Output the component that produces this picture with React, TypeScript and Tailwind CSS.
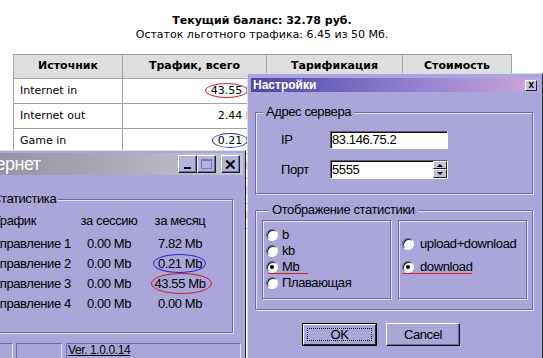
import React from "react";

const rows = [
  { name: "Internet in", total: "43.55", ring: "red", tar: "1.50 руб./Мб", cost: "29.18" },
  { name: "Internet out", total: "2.44", tar: "1.50 руб./Мб", cost: "3.60" },
  { name: "Game in", total: "0.21", ring: "blue", tar: "0.00 руб./Мб", cost: "0.00" },
  { name: "Game out", total: "0.00", tar: "0.00 руб./Мб", cost: "0.00" },
  { name: "Local in", total: "0.00", tar: "0.00 руб./Мб", cost: "0.00" },
  { name: "Local out", total: "0.00", tar: "0.00 руб./Мб", cost: "0.00" },
];

const stats = [
  { name: "Направление 1", s: "0.00 Mb", m: "7.82 Mb" },
  { name: "Направление 2", s: "0.00 Mb", m: "0.21 Mb", ring: "blue" },
  { name: "Направление 3", s: "0.00 Mb", m: "43.55 Mb", ring: "red" },
  { name: "Направление 4", s: "0.00 Mb", m: "0.00 Mb" },
];

function Radio({ checked }: { checked?: boolean }) {
  return (
    <span className="flex h-[12px] w-[12px] shrink-0 items-center justify-center rounded-full border border-t-[#6a6880] border-l-[#6a6880] border-b-white border-r-white bg-white shadow-[inset_1px_1px_0_#1a1a1a]">
      {checked && <span className="h-[4px] w-[4px] rounded-full bg-black" />}
    </span>
  );
}

function WinButton({ children }: { children: React.ReactNode }) {
  return (
    <span className="flex h-[18px] w-[19px] items-center justify-center border border-t-white border-l-white border-r-[#202030] border-b-[#202030] bg-[#b6b2de] shadow-[inset_-1px_-1px_0_#6e6a9c]">
      {children}
    </span>
  );
}

export default function App() {
  return (
    <div className="relative h-[358px] w-[543px] overflow-hidden bg-white font-['DejaVu_Sans',Verdana,sans-serif] text-black">
      {/* page behind the windows */}
      <div className="ml-[13px] w-[498px] pt-[14px] text-center">
        <div className="text-[11px] font-bold leading-[14px]">Текущий баланс: 32.78 руб.</div>
        <div className="text-[11px] leading-[14px]">Остаток льготного трафика: 6.45 из 50 Мб.</div>
      </div>
      <table className="ml-[13px] mt-[12px] w-[498px] table-fixed border-collapse text-[11px]">
        <colgroup>
          <col className="w-[109px]" />
          <col className="w-[144px]" />
          <col className="w-[136px]" />
          <col className="w-[109px]" />
        </colgroup>
        <thead>
          <tr className="h-[24px] bg-[#dedede]">
            <th className="border border-[#a3a3a3] font-bold">Источник</th>
            <th className="border border-[#a3a3a3] font-bold">Трафик, всего</th>
            <th className="border border-[#a3a3a3] font-bold">Тарификация</th>
            <th className="border border-[#a3a3a3] font-bold">Стоимость</th>
          </tr>
        </thead>
        <tbody>
          {rows.map((r) => (
            <tr key={r.name} className="h-[25px]">
              <td className="border border-[#a3a3a3] pl-[6px]">{r.name}</td>
              <td className="border border-[#a3a3a3] pr-[4px] text-right">
                <span className="relative">
                  {r.total}
                  {r.ring === "red" && (
                    <span className="absolute -bottom-[1px] -left-[6px] -right-[6px] -top-[1px] rounded-[50%] border border-[#c0262b]" />
                  )}
                  {r.ring === "blue" && (
                    <span className="absolute -bottom-[1px] -left-[6px] -right-[6px] -top-[1px] rounded-[50%] border border-[#2230b8]" />
                  )}
                </span>{" "}
                Мб
              </td>
              <td className="border border-[#a3a3a3] text-center">{r.tar}</td>
              <td className="border border-[#a3a3a3] pr-[6px] text-right">{r.cost}</td>
            </tr>
          ))}
        </tbody>
      </table>

      {/* Интернет window (inactive) */}
      <div className="absolute left-[-40px] top-[150px] h-[215px] w-[286px] border border-t-[#e4e2f6] border-l-[#e4e2f6] border-r-[#24223a] border-b-[#24223a] bg-[#aaa6da] p-[2px] font-['Liberation_Sans',Arial,sans-serif] text-[13px] tracking-[-0.4px]">
        <div className="flex h-[22px] items-center justify-between bg-gradient-to-r from-[#8c8c9a] to-[#c4c4d2] pl-[3px] pr-[3px]">
          <span className="text-[18px] tracking-[-0.5px] text-white">Интернет</span>
          <div className="flex items-center">
            <WinButton>
              <span className="mt-[8px] h-[2px] w-[7px] bg-black" />
            </WinButton>
            <WinButton>
              <span className="h-[10px] w-[11px] border border-t-2 border-[#7c74c4]" />
            </WinButton>
            <span className="w-[5px]" />
            <WinButton>
              <span className="text-[15px] font-bold leading-none">✕</span>
            </WinButton>
          </div>
        </div>
        <fieldset className="ml-[7px] mr-[10px] mt-[17px] border border-[#6e68b2] pb-[21px] pl-[13px] shadow-[1px_1px_0_#e6e4f6,inset_1px_1px_0_#e6e4f6]">
          <legend className="ml-[6px] bg-[#aaa6da] px-[2px] leading-[14px]">Статистика</legend>
          <div className="grid grid-cols-[90px_70px_72px] pt-[8px] leading-[14px]">
            <span className="pl-[9px]">Трафик</span>
            <span className="text-center">за сессию</span>
            <span className="text-center">за месяц</span>
            {stats.map((s, i) => (
              <React.Fragment key={s.name}>
                <span className={i === 0 ? "mt-[9px]" : "mt-[6px]"}>{s.name}</span>
                <span className={(i === 0 ? "mt-[9px]" : "mt-[6px]") + " text-center"}>{s.s}</span>
                <span className={(i === 0 ? "mt-[9px]" : "mt-[6px]") + " text-center"}>
                  <span className="relative">
                    {s.m}
                    {s.ring === "blue" && (
                      <span className="absolute -bottom-[2px] -left-[5px] -right-[4px] -top-[2px] rounded-[50%] border border-[#2a2ad0]" />
                    )}
                    {s.ring === "red" && (
                      <span className="absolute -bottom-[3px] -left-[3px] -right-[6px] -top-[3px] rounded-[50%] border border-[#cc2030]" />
                    )}
                  </span>
                </span>
              </React.Fragment>
            ))}
          </div>
        </fieldset>
        <div className="mt-[10px] flex h-[17px]">
          <span className="ml-[7px] w-[43px] border border-t-[#6e68b2] border-l-[#6e68b2] border-b-[#e6e4f6] border-r-[#e6e4f6]" />
          <span className="ml-[3px] w-[46px] border border-t-[#6e68b2] border-l-[#6e68b2] border-b-[#e6e4f6] border-r-[#e6e4f6]" />
          <span className="relative ml-[4px] w-[175px] border border-t-[#6e68b2] border-l-[#6e68b2] border-b-[#e6e4f6] border-r-[#e6e4f6] pl-[1px] text-[12px] leading-[13px] underline">
            Ver. 1.0.0.14
            <span className="absolute left-[1px] top-[14px] h-[1px] w-[81px] bg-[#e01818]" />
          </span>
        </div>
      </div>

      {/* Настройки dialog (active) */}
      <div className="absolute left-[247px] top-[73px] h-[290px] w-[296px] border border-t-[#dcdaf2] border-l-[#dcdaf2] border-r-[#302e4a] border-b-[#302e4a] bg-[#aaa6da] p-[3px] font-['Liberation_Sans',Arial,sans-serif] text-[13px] tracking-[-0.4px]">
        <div className="mt-[1px] flex h-[14px] items-center justify-between bg-gradient-to-r from-[#5044a6] via-[#8a7acb] to-[#cda7dc] pl-[2px] pr-[2px]">
          <span className="text-[12px] font-bold tracking-normal text-white">Настройки</span>
          <span className="flex h-[11px] w-[12px] items-center justify-center border border-t-white border-l-white border-r-[#202030] border-b-[#202030] bg-[#c4c2dc] text-[10px] font-bold leading-none">
            x
          </span>
        </div>

        <fieldset className="ml-[4px] mr-[6px] mt-[13px] border border-[#6e68b2] pb-[14px] shadow-[1px_1px_0_#e6e4f6,inset_1px_1px_0_#e6e4f6]">
          <legend className="ml-[7px] bg-[#aaa6da] px-[3px] leading-[14px]">Адрес сервера</legend>
          <div className="mt-[11px] flex items-center">
            <span className="w-[74px] pl-[25px]">IP</span>
            <span className="flex h-[18px] w-[118px] items-center border border-t-[#5c5a70] border-l-[#5c5a70] border-b-white border-r-white bg-white pl-[1px] shadow-[inset_1px_1px_0_#111]">
              83.146.75.2
            </span>
          </div>
          <div className="mt-[10px] flex items-center">
            <span className="w-[74px] pl-[25px]">Порт</span>
            <span className="flex h-[19px] w-[118px] items-center border border-t-[#5c5a70] border-l-[#5c5a70] border-b-white border-r-white bg-white pl-[1px] shadow-[inset_1px_1px_0_#111]">
              <span className="flex-1">5555</span>
              <span className="flex h-full w-[14px] flex-col">
                <span className="flex flex-1 items-center justify-center border border-t-white border-l-white border-r-[#222] border-b-[#222] bg-[#c4c2dc]">
                  <span className="h-0 w-0 border-x-[3px] border-b-[3px] border-x-transparent border-b-black" />
                </span>
                <span className="flex flex-1 items-center justify-center border border-t-white border-l-white border-r-[#222] border-b-[#222] bg-[#c4c2dc]">
                  <span className="h-0 w-0 border-x-[3px] border-t-[3px] border-x-transparent border-t-black" />
                </span>
              </span>
            </span>
          </div>
        </fieldset>

        <fieldset className="ml-[4px] mr-[6px] mt-[9px] border border-[#6e68b2] pb-[10px] pl-[6px] shadow-[1px_1px_0_#e6e4f6,inset_1px_1px_0_#e6e4f6]">
          <legend className="ml-[7px] bg-[#aaa6da] px-[3px] leading-[14px]">Отображение статистики</legend>
          <div className="mt-[3px] flex gap-[7px]">
            <div className="h-[79px] w-[129px] border border-[#6e68b2] pl-[3px] pt-[7px] leading-[14px] shadow-[1px_1px_0_#e6e4f6,inset_1px_1px_0_#e6e4f6]">
              <div className="flex items-center gap-[4px]">
                <Radio />
                <span>b</span>
              </div>
              <div className="mt-[2px] flex items-center gap-[4px]">
                <Radio />
                <span>kb</span>
              </div>
              <div className="relative mt-[2px] flex items-center gap-[4px]">
                <Radio checked />
                <span>Mb</span>
                <span className="absolute left-[2px] top-[13px] h-[1px] w-[40px] bg-[#e01818]" />
              </div>
              <div className="mt-[2px] flex items-center gap-[4px]">
                <Radio />
                <span>Плавающая</span>
              </div>
            </div>
            <div className="h-[79px] w-[129px] border border-[#6e68b2] pl-[3px] pt-[16px] leading-[14px] shadow-[1px_1px_0_#e6e4f6,inset_1px_1px_0_#e6e4f6]">
              <div className="flex items-center gap-[6px]">
                <Radio />
                <span>upload+download</span>
              </div>
              <div className="relative mt-[9px] flex items-center gap-[6px]">
                <Radio checked />
                <span>download</span>
                <span className="absolute left-0 top-[13px] h-[1px] w-[70px] bg-[#e01818]" />
              </div>
            </div>
          </div>
        </fieldset>

        <div className="mt-[13px] flex pl-[51px]">
          <span className="flex h-[23px] w-[75px] items-center justify-center border border-black">
            <span className="flex h-full w-full items-center justify-center border border-t-white border-l-white border-r-[#222] border-b-[#222] p-[3px]">
              <span className="flex h-full w-full items-center justify-center border border-dotted border-black">OK</span>
            </span>
          </span>
          <span className="ml-[9px] flex h-[23px] w-[74px] items-center justify-center border border-t-white border-l-white border-r-[#111] border-b-[#111] shadow-[inset_-1px_-1px_0_#6e6a9c]">
            Cancel
          </span>
        </div>
      </div>
    </div>
  );
}
